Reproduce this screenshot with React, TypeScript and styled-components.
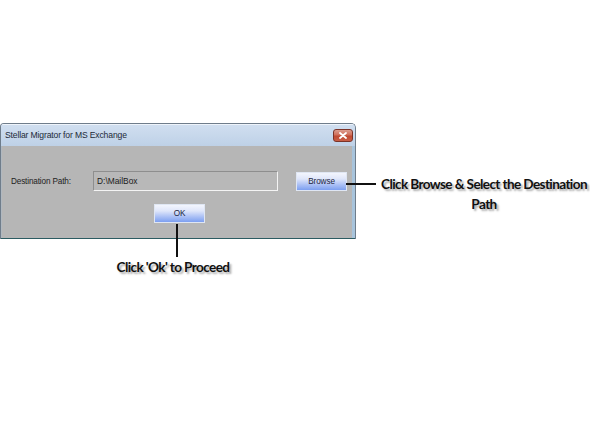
import React from "react";
import styled, { createGlobalStyle } from "styled-components";

const Global = createGlobalStyle`
  html, body { margin: 0; padding: 0; background: #ffffff; }
  #root { width: 590px; height: 421px; }
`;

const Page = styled.div`
  position: relative;
  width: 590px;
  height: 421px;
  overflow: hidden;
  background: #ffffff;
  padding-top: 123px;
  box-sizing: border-box;
`;

const Window = styled.div`
  width: 356px;
  height: 116px;
  box-sizing: border-box;
  display: flex;
  flex-direction: column;
  border: 1px solid #6f7d8b;
  border-bottom: none;
  border-radius: 4px 5px 0 0;
  background: #c3d3e8;
  overflow: hidden;
`;

const TitleBar = styled.div`
  height: 22px;
  flex: none;
  display: flex;
  align-items: center;
  justify-content: space-between;
  padding: 0 2px 0 4px;
  background: linear-gradient(#d1dff0, #bed1e7);
  box-shadow: inset 0 1px 0 #eef4fb;
`;

const Title = styled.span`
  font-family: "Liberation Sans", Arial, sans-serif;
  font-size: 8.6px;
  color: #1d2a38;
  letter-spacing: -0.15px;
`;

const CloseBtn = styled.div`
  width: 20px;
  height: 13px;
  box-sizing: border-box;
  margin-top: 1px;
  border: 1px solid #7b3328;
  border-radius: 3px;
  background: linear-gradient(#dc9d8f 0%, #d06e5a 45%, #c04a33 55%, #c85e46 100%);
  display: flex;
  align-items: center;
  justify-content: center;
`;

const Frame = styled.div`
  flex: 1;
  display: flex;
  padding: 0 3px 0 1px;
  background: linear-gradient(90deg, #b0b8c0 0, #b0b8c0 1px, #a8c4dc 1px);
  border-bottom: 1px solid #2c5c62;
  box-shadow: 0 2px 0 #a6d0da;
`;

const Body = styled.div`
  flex: 1;
  background: #b6b6b6;
  box-sizing: border-box;
  padding: 25px 0 0 9px;
  display: flex;
  flex-direction: column;
`;

const Row = styled.div`
  display: flex;
  align-items: center;
  height: 20px;
`;

const Label = styled.span`
  width: 82px;
  font-family: "Liberation Sans", Arial, sans-serif;
  font-size: 8.2px;
  color: #222;
  letter-spacing: -0.15px;
`;

const Field = styled.div`
  width: 185px;
  height: 20px;
  box-sizing: border-box;
  border-top: 1px solid #8e8e8e;
  border-left: 1px solid #8e8e8e;
  border-right: 1px solid #f4f4f4;
  border-bottom: 1px solid #f4f4f4;
  background: #b8b8b8;
  display: flex;
  align-items: center;
  padding-left: 3px;
  font-family: "Liberation Sans", Arial, sans-serif;
  font-size: 8.4px;
  color: #1a1a1a;
`;

const Button = styled.div<{ $ml?: number }>`
  width: 51px;
  height: 19px;
  box-sizing: border-box;
  margin-left: ${(p) => p.$ml ?? 0}px;
  border: 1px solid #dfe6f3;
  background: linear-gradient(#f3f5fd 0%, #dfe6fa 35%, #a9bff5 70%, #7d9ff0 100%);
  display: flex;
  align-items: center;
  justify-content: center;
  font-family: "Liberation Sans", Arial, sans-serif;
  font-size: 8.2px;
  color: #1d2540;
  letter-spacing: -0.1px;
`;

const OkRow = styled.div`
  display: flex;
  margin-top: 13px;
  padding-left: 143px;
`;

const BrowseCallout = styled.div`
  position: absolute;
  left: 346px;
  top: 174px;
  display: flex;
  align-items: flex-start;
`;

const HLine = styled.div`
  width: 30px;
  height: 2px;
  margin-top: 9px;
  margin-right: 4px;
  background: #111;
`;

const CalloutText = styled.div<{ $w: number }>`
  width: ${(p) => p.$w}px;
  font-family: Lato, "Open Sans", sans-serif;
  font-weight: 700;
  font-size: 13.6px;
  letter-spacing: -0.62px;
  line-height: 20px;
  color: #111;
  text-align: center;
  text-shadow: 2px 2px 2px rgba(0, 0, 0, 0.35);
`;

const OkCallout = styled.div`
  position: absolute;
  left: 113px;
  top: 224px;
  width: 120px;
  display: flex;
  flex-direction: column;
  align-items: center;
`;

const VLine = styled.div`
  width: 2px;
  height: 33px;
  margin-left: 8px;
  background: #111;
`;

export default function App() {
  return (
    <>
      <Global />
      <Page>
        <Window>
          <TitleBar>
            <Title>Stellar Migrator for MS Exchange</Title>
            <CloseBtn>
              <svg width="8" height="7" viewBox="0 0 8 7">
                <path d="M1 1 L7 6 M7 1 L1 6" stroke="#ffffff" strokeWidth="1.8" strokeLinecap="round" />
              </svg>
            </CloseBtn>
          </TitleBar>
          <Frame>
            <Body>
              <Row>
                <Label>Destination Path:</Label>
                <Field>D:\MailBox</Field>
                <Button $ml={18}>Browse</Button>
              </Row>
              <OkRow>
                <Button>OK</Button>
              </OkRow>
            </Body>
          </Frame>
        </Window>
        <BrowseCallout>
          <HLine />
          <CalloutText $w={208}>Click Browse &amp; Select the Destination Path</CalloutText>
        </BrowseCallout>
        <OkCallout>
          <VLine />
          <CalloutText $w={120}>Click 'Ok' to Proceed</CalloutText>
        </OkCallout>
      </Page>
    </>
  );
}
